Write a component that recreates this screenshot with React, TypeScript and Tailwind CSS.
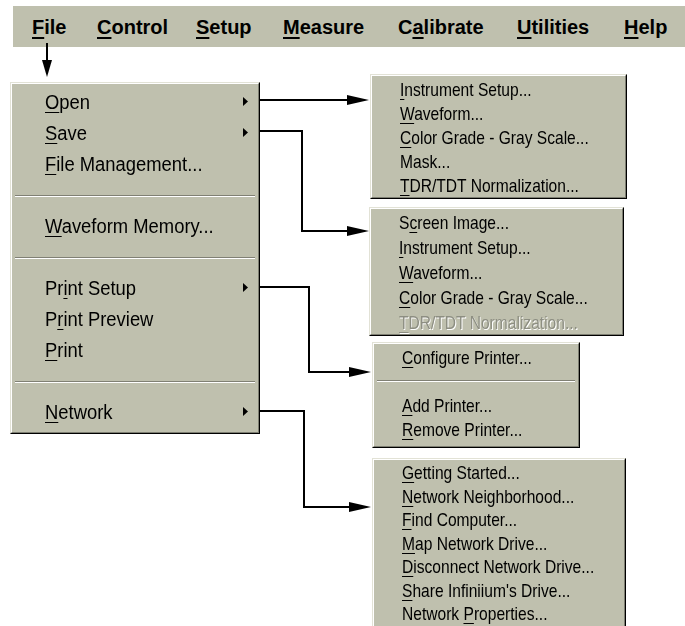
import React from 'react'

type Item = { label: string; sub?: boolean; disabled?: boolean } | 'sep'

// '&' marks the mnemonic letter, like a Windows resource string
const Label = ({ text }: { text: string }) => {
  const i = text.indexOf('&')
  if (i < 0) return <>{text}</>
  return (
    <>
      {text.slice(0, i)}
      <u className="underline decoration-1 underline-offset-[3px]">{text[i + 1]}</u>
      {text.slice(i + 2)}
    </>
  )
}

const barItems = [
  { label: '&File', w: 'w-[65px]' },
  { label: '&Control', w: 'w-[99px]' },
  { label: '&Setup', w: 'w-[87px]' },
  { label: '&Measure', w: 'w-[115px]' },
  { label: 'C&alibrate', w: 'w-[119px]' },
  { label: '&Utilities', w: 'w-[107px]' },
  { label: '&Help', w: 'w-[50px]' },
]

const fileMenu: Item[] = [
  { label: '&Open', sub: true },
  { label: '&Save', sub: true },
  { label: '&File Management...' },
  'sep',
  { label: '&Waveform Memory...' },
  'sep',
  { label: 'Pr&int Setup', sub: true },
  { label: 'P&rint Preview' },
  { label: '&Print' },
  'sep',
  { label: '&Network', sub: true },
]

const openMenu: Item[] = [
  { label: '&Instrument Setup...' },
  { label: '&Waveform...' },
  { label: '&Color Grade - Gray Scale...' },
  { label: 'Mask...' },
  { label: '&TDR/TDT Normalization...' },
]

const saveMenu: Item[] = [
  { label: 'S&creen Image...' },
  { label: '&Instrument Setup...' },
  { label: '&Waveform...' },
  { label: '&Color Grade - Gray Scale...' },
  { label: '&TDR/TDT Normalization...', disabled: true },
]

const printMenu: Item[] = [
  { label: '&Configure Printer...' },
  'sep',
  { label: '&Add Printer...' },
  { label: '&Remove Printer...' },
]

const networkMenu: Item[] = [
  { label: '&Getting Started...' },
  { label: '&Network Neighborhood...' },
  { label: '&Find Computer...' },
  { label: '&Map Network Drive...' },
  { label: '&Disconnect Network Drive...' },
  { label: '&Share Infiniium\'s Drive...' },
  { label: 'Network &Properties...' },
]

const Panel = ({ className, children }: { className: string; children: React.ReactNode }) => (
  <div
    className={`absolute bg-[#bfc0ae] border border-t-[#e2e2d6] border-l-[#e2e2d6] border-r-black border-b-black ${className}`}
  >
    <div className="h-full border border-t-white border-l-white border-r-[#7d7e72] border-b-[#7d7e72]">
      {children}
    </div>
  </div>
)

const SubArrow = () => (
  <svg width="5" height="9" viewBox="0 0 5 9" className="shrink-0">
    <path d="M0 0 L5 4.5 L0 9 Z" fill="#000" />
  </svg>
)

const MainMenu = () => (
  <Panel className="left-[10px] top-[82px] w-[250px] h-[352px]">
    <div className="pt-[2px]">
      {fileMenu.map((item, i) =>
        item === 'sep' ? (
          <div key={i} className="mx-[3px] mt-[16px] mb-[13px] border-t border-t-[#808074] border-b border-b-white" />
        ) : (
          <div key={i} className="h-[31px] flex items-center justify-between pl-[33px] pr-[10px]">
            <span className="inline-block origin-left scale-x-[0.92] whitespace-nowrap text-[20px] leading-none text-black">
              <Label text={item.label} />
            </span>
            {item.sub && <SubArrow />}
          </div>
        )
      )}
    </div>
  </Panel>
)

const SubMenu = ({ items, className, rowH }: { items: Item[]; className: string; rowH: string }) => (
  <Panel className={className}>
    <div className="pt-[1px]">
      {items.map((item, i) =>
        item === 'sep' ? (
          <div key={i} className="h-[24px] flex items-center px-[3px]">
            <div className="w-full border-t border-t-[#808074] border-b border-b-white" />
          </div>
        ) : (
          <div key={i} className={`${rowH} flex items-center pl-[28px]`}>
            <span
              className={`inline-block origin-left scale-x-[0.82] whitespace-nowrap text-[19px] leading-none ${
                item.disabled ? 'text-[#8d8e82] [text-shadow:1px_1px_0_#ffffff]' : 'text-black'
              }`}
            >
              <Label text={item.label} />
            </span>
          </div>
        )
      )}
    </div>
  </Panel>
)

const Connectors = () => (
  <svg className="absolute inset-0 pointer-events-none" width="685" height="626" viewBox="0 0 685 626">
    <g stroke="#000" strokeWidth="2" fill="none">
      <path d="M47 43 V62" />
      <path d="M260 100 H350" />
      <path d="M260 131 H302 V231 H350" />
      <path d="M260 287 H309 V372 H352" />
      <path d="M260 411 H304 V507 H352" />
    </g>
    <g fill="#000">
      <path d="M42 60 L52 60 L47 77 Z" />
      <path d="M347 95 L369 100 L347 105 Z" />
      <path d="M347 226 L369 231 L347 236 Z" />
      <path d="M349 367 L371 372 L349 377 Z" />
      <path d="M349 502 L371 507 L349 512 Z" />
    </g>
  </svg>
)

export default function App() {
  return (
    <div className="relative w-[685px] h-[626px] overflow-hidden bg-white font-['Liberation_Sans',Arial,sans-serif]">
      <div className="ml-[13px] mt-[6px] h-[41px] flex items-center pl-[19px] bg-[#bfc0ae] text-[20px] font-bold text-black">
        {barItems.map((b) => (
          <span key={b.label} className={`${b.w} shrink-0 whitespace-nowrap [&_u]:decoration-2`}>
            <Label text={b.label} />
          </span>
        ))}
      </div>

      <MainMenu />
      <SubMenu items={openMenu} rowH="h-[24px]" className="left-[370px] top-[74px] w-[257px] h-[125px]" />
      <SubMenu items={saveMenu} rowH="h-[25px]" className="left-[369px] top-[207px] w-[255px] h-[129px]" />
      <SubMenu items={printMenu} rowH="h-[24px]" className="left-[372px] top-[342px] w-[208px] h-[106px]" />
      <SubMenu items={networkMenu} rowH="h-[23.5px]" className="left-[372px] top-[458px] w-[254px] h-[190px]" />

      <Connectors />
    </div>
  )
}
